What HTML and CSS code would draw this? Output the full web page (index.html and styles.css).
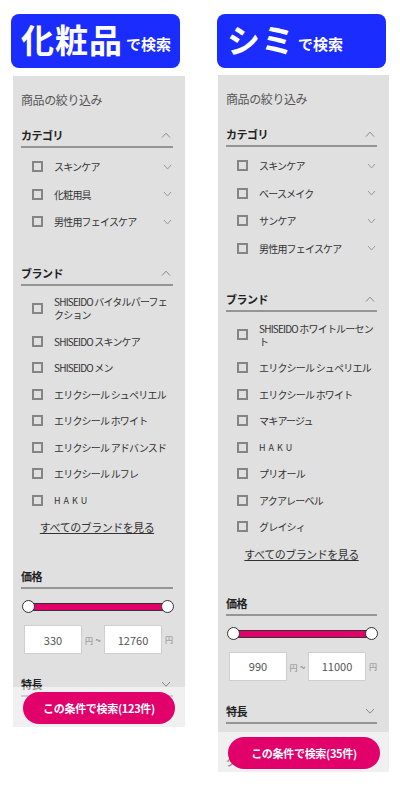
FILE: index.html
```html
<!DOCTYPE html>
<html lang="ja">

<head>
    <meta charset="UTF-8">
    <meta name="viewport" content="width=device-width, initial-scale=1.0">
    <title>検索</title>
    <link rel="stylesheet" href="styles.css">
</head>

<body>
    <div class="columns">

        <!-- 化粧品で検索 -->
        <div class="column">
            <div class="searchTitle">
                <span class="bigWord">化粧品</span><span class="smallWord">で検索</span>
            </div>

            <div class="filterPanel shortPanel">
                <p class="panelTitle">商品の絞り込み</p>

                <div class="filterSection firstSection">
                    <div class="sectionHead">
                        <span>カテゴリ</span>
                        <svg class="chevron" width="10" height="6" viewBox="0 0 10 6"><polyline points="1,5.5 5,1.2 9,5.5" /></svg>
                    </div>
                    <ul class="checkList catList">
                        <li class="checkItem"><span class="box"></span><span class="label">スキンケア</span>
                            <svg class="chevron small" width="9" height="6" viewBox="0 0 9 6"><polyline points="1,1 4.5,5 8,1" /></svg></li>
                        <li class="checkItem"><span class="box"></span><span class="label">化粧用具</span>
                            <svg class="chevron small" width="9" height="6" viewBox="0 0 9 6"><polyline points="1,1 4.5,5 8,1" /></svg></li>
                        <li class="checkItem"><span class="box"></span><span class="label">男性用フェイスケア</span>
                            <svg class="chevron small" width="9" height="6" viewBox="0 0 9 6"><polyline points="1,1 4.5,5 8,1" /></svg></li>
                    </ul>
                </div>

                <div class="filterSection">
                    <div class="sectionHead">
                        <span>ブランド</span>
                        <svg class="chevron" width="10" height="6" viewBox="0 0 10 6"><polyline points="1,5.5 5,1.2 9,5.5" /></svg>
                    </div>
                    <ul class="checkList brandList">
                        <li class="checkItem"><span class="box"></span><span class="label">SHISEIDO バイタルパーフェクション</span></li>
                        <li class="checkItem"><span class="box"></span><span class="label">SHISEIDO スキンケア</span></li>
                        <li class="checkItem"><span class="box"></span><span class="label">SHISEIDO メン</span></li>
                        <li class="checkItem"><span class="box"></span><span class="label">エリクシール シュペリエル</span></li>
                        <li class="checkItem"><span class="box"></span><span class="label">エリクシール ホワイト</span></li>
                        <li class="checkItem"><span class="box"></span><span class="label">エリクシール アドバンスド</span></li>
                        <li class="checkItem"><span class="box"></span><span class="label">エリクシール ルフレ</span></li>
                        <li class="checkItem"><span class="box"></span><span class="label wide">HAKU</span></li>
                    </ul>
                    <a class="allLink" href="#">すべてのブランドを見る</a>
                </div>

                <div class="filterSection priceSection">
                    <div class="sectionHead">
                        <span>価格</span>
                    </div>
                    <div class="slider">
                        <div class="track"></div>
                        <span class="knob knobLeft"></span>
                        <span class="knob knobRight"></span>
                    </div>
                    <div class="priceRow">
                        <input class="priceBox" type="text" value="330">
                        <span class="sep"><span class="yen">円</span> ~</span>
                        <input class="priceBox" type="text" value="12760">
                        <span class="yen yenLast">円</span>
                    </div>
                </div>

                <div class="filterSection featureSection">
                    <div class="sectionHead">
                        <span>特長</span>
                        <svg class="chevron" width="10" height="6" viewBox="0 0 10 6"><polyline points="1,1 5,5.2 9,1" /></svg>
                    </div>
                </div>

                <div class="searchBar">
                    <button class="searchBtn">この条件で検索(123件)</button>
                </div>
            </div>
        </div>

        <!-- シミで検索 -->
        <div class="column">
            <div class="searchTitle">
                <span class="bigWord">シミ</span><span class="smallWord">で検索</span>
            </div>

            <div class="filterPanel tallPanel">
                <p class="panelTitle">商品の絞り込み</p>

                <div class="filterSection firstSection">
                    <div class="sectionHead">
                        <span>カテゴリ</span>
                        <svg class="chevron" width="10" height="6" viewBox="0 0 10 6"><polyline points="1,5.5 5,1.2 9,5.5" /></svg>
                    </div>
                    <ul class="checkList catList">
                        <li class="checkItem"><span class="box"></span><span class="label">スキンケア</span>
                            <svg class="chevron small" width="9" height="6" viewBox="0 0 9 6"><polyline points="1,1 4.5,5 8,1" /></svg></li>
                        <li class="checkItem"><span class="box"></span><span class="label">ベースメイク</span>
                            <svg class="chevron small" width="9" height="6" viewBox="0 0 9 6"><polyline points="1,1 4.5,5 8,1" /></svg></li>
                        <li class="checkItem"><span class="box"></span><span class="label">サンケア</span>
                            <svg class="chevron small" width="9" height="6" viewBox="0 0 9 6"><polyline points="1,1 4.5,5 8,1" /></svg></li>
                        <li class="checkItem"><span class="box"></span><span class="label">男性用フェイスケア</span>
                            <svg class="chevron small" width="9" height="6" viewBox="0 0 9 6"><polyline points="1,1 4.5,5 8,1" /></svg></li>
                    </ul>
                </div>

                <div class="filterSection">
                    <div class="sectionHead">
                        <span>ブランド</span>
                        <svg class="chevron" width="10" height="6" viewBox="0 0 10 6"><polyline points="1,5.5 5,1.2 9,5.5" /></svg>
                    </div>
                    <ul class="checkList brandList">
                        <li class="checkItem"><span class="box"></span><span class="label">SHISEIDO ホワイトルーセント</span></li>
                        <li class="checkItem"><span class="box"></span><span class="label">エリクシール シュペリエル</span></li>
                        <li class="checkItem"><span class="box"></span><span class="label">エリクシール ホワイト</span></li>
                        <li class="checkItem"><span class="box"></span><span class="label">マキアージュ</span></li>
                        <li class="checkItem"><span class="box"></span><span class="label wide">HAKU</span></li>
                        <li class="checkItem"><span class="box"></span><span class="label">プリオール</span></li>
                        <li class="checkItem"><span class="box"></span><span class="label">アクアレーベル</span></li>
                        <li class="checkItem"><span class="box"></span><span class="label">グレイシィ</span></li>
                    </ul>
                    <a class="allLink" href="#">すべてのブランドを見る</a>
                </div>

                <div class="filterSection priceSection">
                    <div class="sectionHead">
                        <span>価格</span>
                    </div>
                    <div class="slider">
                        <div class="track"></div>
                        <span class="knob knobLeft"></span>
                        <span class="knob knobRight"></span>
                    </div>
                    <div class="priceRow">
                        <input class="priceBox" type="text" value="990">
                        <span class="sep"><span class="yen">円</span> ~</span>
                        <input class="priceBox" type="text" value="11000">
                        <span class="yen yenLast">円</span>
                    </div>
                </div>

                <div class="filterSection featureSection">
                    <div class="sectionHead">
                        <span>特長</span>
                        <svg class="chevron" width="10" height="6" viewBox="0 0 10 6"><polyline points="1,1 5,5.2 9,1" /></svg>
                    </div>
                </div>

                <div class="filterSection">
                    <div class="sectionHead">
                        <span>タイプ</span>
                        <svg class="chevron" width="10" height="6" viewBox="0 0 10 6"><polyline points="1,1 5,5.2 9,1" /></svg>
                    </div>
                </div>

                <div class="searchBar">
                    <button class="searchBtn">この条件で検索(35件)</button>
                </div>
            </div>
        </div>

    </div>
</body>

</html>
```

FILE: styles.css
```css
body {
    margin: 0;
    background-color: #ffffff;
    font-family: "Noto Sans CJK JP", "Noto Sans", sans-serif;
    color: #333333;
}

.columns {
    display: flex;
    gap: 32px;
    padding: 14px 0 0 11px;
}

.column {
    width: 174px;
}

/* blue title box */
.searchTitle {
    width: 169px;
    height: 54px;
    box-sizing: border-box;
    padding: 0 0 4px 10px;
    background-color: #1b2cff;
    border-radius: 8px;
    color: #ffffff;
    font-weight: bold;
    display: flex;
    align-items: center;
    white-space: nowrap;
}

.bigWord {
    font-size: 33px;
    line-height: 40px;
    letter-spacing: 1px;
}

.smallWord {
    font-size: 15px;
    line-height: 40px;
    margin-left: 3px;
    position: relative;
    top: 5px;
}

/* gray filter panel */
.filterPanel {
    position: relative;
    overflow: hidden;
    width: 172px;
    margin: 8px 0 0 2px;
    box-sizing: border-box;
    padding: 16px 12px 0 8px;
    background-color: #e0e0e0;
}

.shortPanel {
    height: 651px;
}

.tallPanel {
    width: 171px;
    height: 697px;
    margin-top: 7px;
    margin-left: 1px;
}

.panelTitle {
    margin: 0;
    font-size: 12px;
    line-height: 16px;
    letter-spacing: -0.4px;
    color: #555555;
}

.filterSection {
    margin-top: 29px;
}

.firstSection {
    margin-top: 19px;
}

.priceSection {
    margin-top: 34px;
}

.featureSection {
    margin-top: 22px;
}

.sectionHead {
    display: flex;
    justify-content: space-between;
    align-items: center;
    font-size: 11px;
    font-weight: bold;
    line-height: 16px;
    letter-spacing: -0.5px;
    color: #222222;
    padding-bottom: 3px;
    border-bottom: 2px solid #959595;
}

.chevron {
    fill: none;
    stroke: #888888;
    stroke-width: 1;
    margin-right: 2px;
}

.chevron.small {
    margin-left: auto;
    margin-right: 1px;
    stroke: #999999;
}

.checkList {
    list-style: none;
    margin: 0;
    padding: 0;
}

.catList {
    padding-top: 5px;
}

.brandList {
    padding-top: 3px;
}

.checkItem {
    display: flex;
    align-items: center;
    padding-left: 11px;
    font-size: 10px;
    letter-spacing: -0.8px;
    color: #333333;
}

.catList .checkItem {
    height: 27.5px;
}

.brandList .checkItem {
    padding-top: 6.75px;
    padding-bottom: 6.75px;
    line-height: 13px;
}

.box {
    flex: none;
    width: 11px;
    height: 11px;
    box-sizing: border-box;
    border: 2px solid #858585;
    margin-right: 11px;
}

.label.wide {
    letter-spacing: 3px;
    font-size: 9px;
}

.allLink {
    display: block;
    margin-top: 6.5px;
    text-align: center;
    font-size: 11px;
    line-height: 14px;
    letter-spacing: -0.5px;
    color: #333333;
    text-decoration: underline;
}

/* price slider */
.slider {
    position: relative;
    height: 14px;
    margin: 11px 5px 0 7px;
    display: flex;
    align-items: center;
}

.track {
    width: 100%;
    height: 8px;
    box-sizing: border-box;
    background-color: #e2006b;
    border: 1px solid #333333;
}

.knob {
    position: absolute;
    top: 0;
    width: 13px;
    height: 13px;
    box-sizing: border-box;
    border-radius: 50%;
    background-color: #ffffff;
    border: 1px solid #333333;
}

.knobLeft {
    left: -6px;
}

.knobRight {
    right: -6px;
}

.priceRow {
    display: flex;
    align-items: center;
    margin: 11px 0 0 3px;
}

.priceBox {
    width: 58px;
    height: 29px;
    box-sizing: border-box;
    padding: 0;
    border: 1px solid #cfcfcf;
    background-color: #ffffff;
    text-align: center;
    font-family: "Noto Sans CJK JP", "Noto Sans", sans-serif;
    font-size: 11px;
    color: #555555;
}

.sep {
    width: 24px;
    text-align: center;
    font-size: 10px;
    color: #777777;
}

.yen {
    font-size: 8px;
    color: #888888;
}

.yenLast {
    margin-left: 3px;
}

/* translucent bar with the search button */
.searchBar {
    position: absolute;
    left: 0;
    right: 0;
    bottom: 0;
    height: 40px;
    box-sizing: border-box;
    padding: 5px 10px 0 10px;
    background-color: rgba(255, 255, 255, 0.52);
}

.searchBtn {
    width: 152px;
    height: 32px;
    border: none;
    border-radius: 16px;
    background-color: #e2006b;
    color: #ffffff;
    font-family: "Noto Sans CJK JP", "Noto Sans", sans-serif;
    font-size: 11px;
    font-weight: bold;
    letter-spacing: -0.3px;
    cursor: pointer;
}
```
